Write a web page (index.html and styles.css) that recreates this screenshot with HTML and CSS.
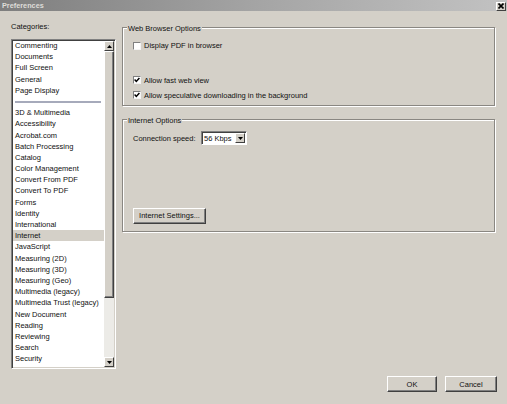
FILE: index.html
```html
<!DOCTYPE html>
<html>
<head>
<meta charset="utf-8">
<title>Preferences</title>
<link rel="stylesheet" href="styles.css">
</head>
<body>
<div class="window">
  <div class="titlebar">
    <span class="title">Preferences</span>
    <span class="close"><svg width="6" height="6" viewBox="0 0 6 6"><path d="M0.5 0.5L5.5 5.5M5.5 0.5L0.5 5.5" stroke="#000" stroke-width="1.6"/></svg></span>
  </div>
  <div class="main">
    <div class="left">
      <div class="cat-label">Categories:</div>
      <div class="listbox">
        <ul class="items">
          <li>Commenting</li>
          <li>Documents</li>
          <li>Full Screen</li>
          <li>General</li>
          <li>Page Display</li>
          <li class="sep"><span></span></li>
          <li>3D &amp; Multimedia</li>
          <li>Accessibility</li>
          <li>Acrobat.com</li>
          <li>Batch Processing</li>
          <li>Catalog</li>
          <li>Color Management</li>
          <li>Convert From PDF</li>
          <li>Convert To PDF</li>
          <li>Forms</li>
          <li>Identity</li>
          <li>International</li>
          <li class="selected">Internet</li>
          <li>JavaScript</li>
          <li>Measuring (2D)</li>
          <li>Measuring (3D)</li>
          <li>Measuring (Geo)</li>
          <li>Multimedia (legacy)</li>
          <li>Multimedia Trust (legacy)</li>
          <li>New Document</li>
          <li>Reading</li>
          <li>Reviewing</li>
          <li>Search</li>
          <li>Security</li>
          <li>Security (Enhanced)</li>
        </ul>
        <div class="scrollbar">
          <div class="sb-btn"><svg width="5" height="3" viewBox="0 0 5 3"><path d="M2.5 0L5 3H0z" fill="#000"/></svg></div>
          <div class="sb-thumb"></div>
          <div class="sb-track"></div>
          <div class="sb-btn"><svg width="5" height="3" viewBox="0 0 5 3"><path d="M0 0H5L2.5 3z" fill="#000"/></svg></div>
        </div>
      </div>
    </div>
    <div class="right">
      <div class="group g1">
        <div class="legend">Web Browser Options</div>
        <div class="row r1"><span class="cb"></span><span>Display PDF in browser</span></div>
        <div class="row r2"><span class="cb checked"><svg width="6" height="6" viewBox="0 0 6 6"><path d="M0.6 2.6L2.3 4.4L5.4 0.9" stroke="#000" stroke-width="1.5" fill="none"/></svg></span><span>Allow fast web view</span></div>
        <div class="row r3"><span class="cb checked"><svg width="6" height="6" viewBox="0 0 6 6"><path d="M0.6 2.6L2.3 4.4L5.4 0.9" stroke="#000" stroke-width="1.5" fill="none"/></svg></span><span>Allow speculative downloading in the background</span></div>
      </div>
      <div class="group g2">
        <div class="legend">Internet Options</div>
        <div class="row conn">
          <span class="conn-label">Connection speed:</span>
          <span class="select"><span class="sel-text">56 Kbps</span><span class="sel-btn"><svg width="5" height="3" viewBox="0 0 5 3"><path d="M0 0H5L2.5 3z" fill="#000"/></svg></span></span>
        </div>
        <div class="btn settings">Internet Settings...</div>
      </div>
    </div>
  </div>
  <div class="footer">
    <div class="btn ok">OK</div>
    <div class="btn cancel">Cancel</div>
  </div>
</div>
</body>
</html>
```
FILE: styles.css
```css
html, body {
  margin: 0;
  padding: 0;
  background: #d4d0c8;
}
body {
  font-family: "Liberation Sans", Arial, sans-serif;
  font-size: 7.5px;
  color: #111;
}
.window {
  width: 507px;
  height: 404px;
  overflow: hidden;
}
.titlebar {
  height: 11px;
  background: linear-gradient(to right, #7e7e7e, #a4a4a4 50%, #c2c2c2);
  display: flex;
  align-items: center;
  justify-content: space-between;
  padding: 0 1px 0 2px;
}
.title {
  color: #dedcd8;
  font-weight: bold;
  font-size: 7.3px;
}
.close {
  width: 10px;
  height: 9px;
  margin-top: 1px;
  background: #d4d0c8;
  border: 1px solid;
  border-color: #fff #404040 #404040 #fff;
  box-sizing: border-box;
  display: flex;
  align-items: center;
  justify-content: center;
}
.main {
  display: flex;
  align-items: flex-start;
  padding-top: 10px;
  height: 358px;
  box-sizing: border-box;
}
.left {
  margin-left: 11px;
  width: 105px;
}
.cat-label {
  height: 11px;
  line-height: 11px;
}
.listbox {
  margin-top: 7px;
  height: 330px;
  box-sizing: border-box;
  border: 1px solid;
  border-color: #808080 #fff #fff #808080;
  box-shadow: inset 1px 1px 0 #404040, inset -1px -1px 0 #d4d0c8;
  background: #fff;
  display: flex;
  padding: 1px;
  overflow: hidden;
}
.items {
  list-style: none;
  margin: -1px 0 0 0;
  padding: 0;
  flex: 1;
  overflow: hidden;
}
.items li {
  height: 11.2px;
  line-height: 11.2px;
  padding-left: 2px;
  white-space: nowrap;
}
.items li.selected {
  background: #d4d0c8;
}
.items li.sep {
  display: flex;
  align-items: center;
  padding: 0 3px 0 2px;
}
.items li.sep span {
  flex: 1;
  height: 2px;
  background: #a6aabb;
}
.scrollbar {
  width: 10px;
  display: flex;
  flex-direction: column;
  background: #ecebe7;
}
.sb-btn {
  height: 10px;
  box-sizing: border-box;
  background: #d4d0c8;
  border: 1px solid;
  border-color: #fff #404040 #404040 #fff;
  display: flex;
  align-items: center;
  justify-content: center;
}
.sb-thumb {
  height: 247px;
  box-sizing: border-box;
  background: #d4d0c8;
  border: 1px solid;
  border-color: #fff #404040 #404040 #fff;
  box-shadow: inset -1px -1px 0 #808080;
}
.sb-track {
  flex: 1;
}
.right {
  margin-left: 6px;
  width: 373px;
}
.group {
  border: 1px solid #8a8782;
  box-shadow: 1px 1px 0 #fff, inset 1px 1px 0 #fff;
  padding: 0 10px;
}
.g1 {
  margin-top: 6px;
  padding-bottom: 4px;
}
.g2 {
  margin-top: 13px;
  padding-bottom: 7px;
}
.legend {
  display: table;
  margin: -5px 0 0 -6px;
  padding: 0 1px;
  height: 11px;
  line-height: 11px;
  background: #d4d0c8;
}
.row {
  display: flex;
  align-items: center;
  height: 12px;
}
.r1 { margin-top: 5.5px; }
.r2 { margin-top: 22.5px; }
.r3 { margin-top: 3.3px; }
.cb {
  width: 8px;
  height: 8px;
  box-sizing: border-box;
  background: #fff;
  border: 1px solid;
  border-color: #808080 #f4f4f4 #f4f4f4 #808080;
  margin-right: 3px;
  display: flex;
  align-items: center;
  justify-content: center;
}
.conn {
  margin-top: 4.5px;
  height: 15px;
}
.conn-label {
  width: 68px;
  white-space: nowrap;
}
.select {
  width: 46px;
  height: 14px;
  box-sizing: border-box;
  background: #fff;
  border: 1px solid;
  border-color: #808080 #fff #fff #808080;
  box-shadow: inset 1px 1px 0 #404040;
  display: flex;
  align-items: stretch;
  padding: 1px 1px 1px 2px;
}
.sel-text {
  flex: 1;
  line-height: 11px;
}
.sel-btn {
  width: 10px;
  box-sizing: border-box;
  background: #d4d0c8;
  border: 1px solid;
  border-color: #fff #404040 #404040 #fff;
  display: flex;
  align-items: center;
  justify-content: center;
}
.btn {
  height: 16px;
  box-sizing: border-box;
  background: #d4d0c8;
  border: 1px solid;
  border-color: #fff #404040 #404040 #fff;
  box-shadow: inset -1px -1px 0 #808080;
  display: flex;
  align-items: center;
  justify-content: center;
}
.settings {
  margin-top: 62px;
  width: 73px;
}
.footer {
  display: flex;
  justify-content: flex-end;
  gap: 8px;
  padding-right: 10px;
  margin-top: 7px;
}
.ok { width: 50px; }
.cancel { width: 52px; }
```
